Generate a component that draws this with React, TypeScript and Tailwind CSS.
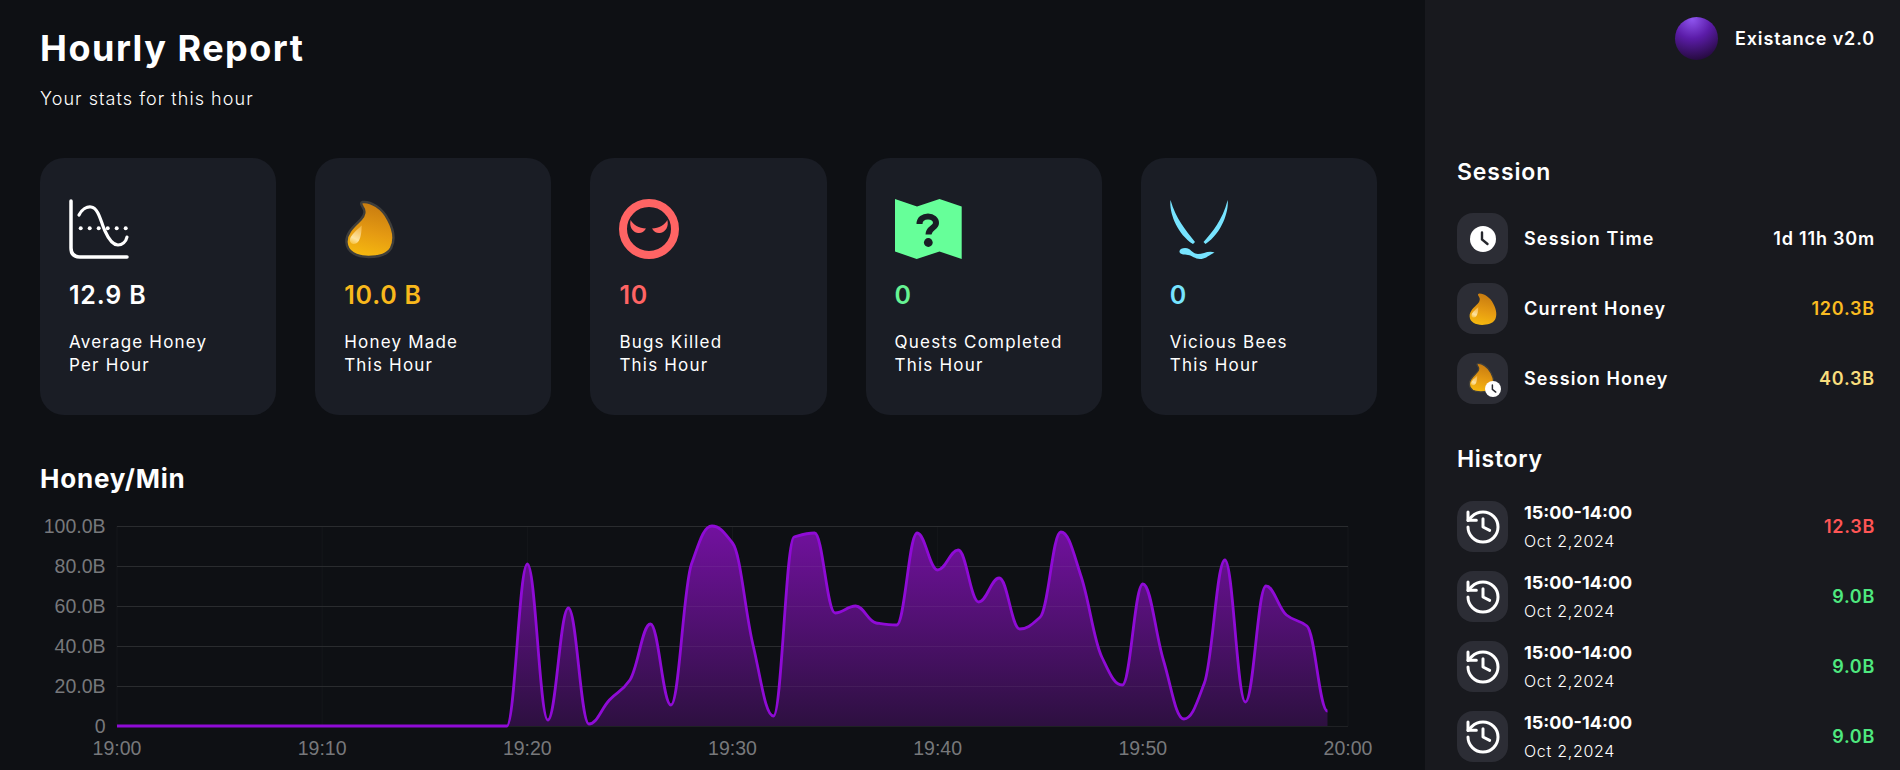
import { History } from "lucide-react";

const values = [
  0, 0, 0, 0, 0, 0, 0, 0, 0, 0, 0, 0, 0, 0, 0, 0, 0, 0, 0, 0, 81, 3, 59, 1, 13, 23, 51, 10.5, 81, 100, 91.5, 40.5, 5, 94.5, 96.5,
  56.5, 60, 51.5, 50.5, 96.5, 78, 88, 62, 74, 48.5, 54.5, 97, 74.5, 34.5, 20.5, 71, 33, 3.5, 21.5, 83, 12, 70, 55.5, 50, 7.5,
];

const X0 = 77;
const PLOT_W = 1231;
const Y_TOP = 16;
const Y_ZERO = 216;
const px = (m: number) => X0 + (m * PLOT_W) / 60;
const py = (v: number) => Y_ZERO - (v * (Y_ZERO - Y_TOP)) / 100;

function linePath() {
  const pts = values.map((v, i) => [px(i), py(v)]);
  const slope = pts.map((p, i) => {
    if (i === 0 || i === pts.length - 1) return 0;
    const a = pts[i][1] - pts[i - 1][1];
    const b = pts[i + 1][1] - pts[i][1];
    if (a * b <= 0) return 0;
    const avg = (a + b) / 2;
    const lim = 1.5 * Math.min(Math.abs(a), Math.abs(b));
    return Math.sign(avg) * Math.min(Math.abs(avg), lim);
  });
  let d = `M${pts[0][0]},${pts[0][1]}`;
  for (let i = 1; i < pts.length; i++) {
    const h = pts[i][0] - pts[i - 1][0];
    d += ` C${pts[i - 1][0] + h * 0.4},${pts[i - 1][1] + slope[i - 1] * 0.4} ${pts[i][0] - h * 0.4},${pts[i][1] - slope[i] * 0.4} ${pts[i][0]},${pts[i][1]}`;
  }
  return d;
}

function Drop({ id, size, outline }: { id: string; size: string; outline?: boolean }) {
  return (
    <svg viewBox="-1 -1 53 61" className={size}>
      <defs>
        <linearGradient id={id} x1="0.6" y1="0" x2="0.4" y2="1">
          <stop offset="0" stopColor="#c67a10" />
          <stop offset="0.55" stopColor="#e59a12" />
          <stop offset="1" stopColor="#f6b90f" />
        </linearGradient>
        <linearGradient id={`${id}h`} x1="0.6" y1="0" x2="0.3" y2="1">
          <stop offset="0" stopColor="#f3b84a" />
          <stop offset="0.7" stopColor="#fde3a0" />
          <stop offset="1" stopColor="#f8c545" />
        </linearGradient>
      </defs>
      <path
        d="M18 2C26 1 38 8 44 20C50 31 51 41 47 49C43 56 33 58 24 58C12 58 2 53 1.5 43C1 33 10 26 16 20C20 16 21 11 18 7C16 4 16 2.5 18 2Z"
        fill={`url(#${id})`}
        stroke={outline ? "#3f3e3b" : "none"}
        strokeWidth="2.5"
      />
      <path d="M17 26C13 30 5 36 5 41C5 45 10 46 13 43C16 40 17 33 17 26Z" fill={`url(#${id}h)`} />
    </svg>
  );
}

function ClockBadge({ size }: { size: string }) {
  return (
    <svg viewBox="0 0 26 26" className={size}>
      <circle cx="13" cy="13" r="13" fill="#ffffff" />
      <path d="M12 6.5V13.5L17.5 18" fill="none" stroke="#26272d" strokeWidth="2.4" strokeLinecap="round" />
    </svg>
  );
}

function ChartIcon() {
  return (
    <svg viewBox="0 0 60 60" className="h-[60px] w-[60px]" fill="none" stroke="#ffffff" strokeLinecap="round">
      <path d="M2 2V49Q2 58 11 58H58" strokeWidth="3.5" />
      <path d="M10 16C13 10 18 7.5 22 8C30 9 32 24 36 32C40 41 44 46 49 46C53 46 57 43 58 38" strokeWidth="3.2" />
      {[11.7, 20.7, 29.7, 38.7, 47.7, 56.7].map((x) => (
        <circle key={x} cx={x} cy="29.3" r="2" fill="#ffffff" stroke="none" />
      ))}
    </svg>
  );
}

function BugIcon() {
  return (
    <svg viewBox="0 0 60 60" className="h-[60px] w-[60px]">
      <circle cx="30" cy="30" r="26" fill="none" stroke="#ff6464" strokeWidth="8" />
      <path d="M11.7 21C14 26 20 29 27 29.5C25 33 22 34.5 19 34C13 33 10 27 11.7 21Z" fill="#ff6464" />
      <path d="M48.3 21C46 26 40 29 33 29.5C35 33 38 34.5 41 34C47 33 50 27 48.3 21Z" fill="#ff6464" />
    </svg>
  );
}

function MapIcon() {
  return (
    <svg viewBox="0 0 67 60" className="h-[60px] w-[67px]">
      <path d="M0 0L22 7.5L44.5 0L66.7 7.5V60L44.5 52.5L21.7 60L0 52.5Z" fill="#66ff99" />
      <path d="M24.5 25C24.5 20 28.5 17.5 33 17.5C38 17.5 41 20.5 41 24C41 29 33.5 29 33.5 35.5" fill="none" stroke="#1a1d25" strokeWidth="6" />
      <circle cx="33.3" cy="43.5" r="4.4" fill="#1a1d25" />
    </svg>
  );
}

function ViciousIcon() {
  return (
    <svg viewBox="0 0 60 60" className="h-[60px] w-[60px]" fill="#77e4ff">
      <path d="M0.5 1C-1 12 6 34 23 45L25 43C15 30 6 20 0.5 1Z" />
      <path d="M57.7 1C59 12 52 34 35.5 45L33.5 43C43 32 52 22 57.7 1Z" />
      <path d="M9.5 52C10 49 16 48 19 50C22 52 24 55 28 55C33 55 39 51 44.5 53.5C39 56 36 60 30 60C25 60 22 56.5 18 56C14 55.5 9 55.5 9.5 52Z" />
    </svg>
  );
}

const cards = [
  { icon: <ChartIcon />, value: "12.9 B", color: "text-white", a: "Average Honey", b: "Per Hour" },
  { icon: <Drop id="d1" size="h-[60px] w-[52px]" outline />, value: "10.0 B", color: "text-[#f8b81c]", a: "Honey Made", b: "This Hour" },
  { icon: <BugIcon />, value: "10", color: "text-[#ff6464]", a: "Bugs Killed", b: "This Hour" },
  { icon: <MapIcon />, value: "0", color: "text-[#66f394]", a: "Quests Completed", b: "This Hour" },
  { icon: <ViciousIcon />, value: "0", color: "text-[#77e4ff]", a: "Vicious Bees", b: "This Hour" },
];

function Chart() {
  const d = linePath();
  const yLabels = ["100.0B", "80.0B", "60.0B", "40.0B", "20.0B", "0"];
  const xLabels = ["19:00", "19:10", "19:20", "19:30", "19:40", "19:50", "20:00"];
  return (
    <svg viewBox="0 0 1385 260" className="mt-[15px] h-[260px] w-[1385px]">
      <defs>
        <linearGradient id="area" gradientUnits="userSpaceOnUse" x1="0" y1={Y_TOP} x2="0" y2={Y_ZERO}>
          <stop offset="0" stopColor="#72119f" />
          <stop offset="1" stopColor="#2d1040" />
        </linearGradient>
      </defs>
      {xLabels.map((_, i) => (
        <line key={i} x1={px(i * 10)} x2={px(i * 10)} y1={Y_TOP} y2={Y_ZERO} stroke="#15171b" />
      ))}
      {yLabels.map((_, i) => (
        <line key={i} x1={X0} x2={X0 + PLOT_W} y1={Y_TOP + i * 40 + 0.5} y2={Y_TOP + i * 40 + 0.5} stroke="#1f2124" />
      ))}
      <path d={`${d} L${px(59)},${Y_ZERO} L${X0},${Y_ZERO} Z`} fill="url(#area)" />
      {yLabels.slice(0, 5).map((_, i) => (
        <line key={i} x1={X0} x2={X0 + PLOT_W} y1={Y_TOP + i * 40 + 0.5} y2={Y_TOP + i * 40 + 0.5} stroke="#ffffff" strokeOpacity="0.05" />
      ))}
      <path d={d} fill="none" stroke="#8f0bd6" strokeWidth="2.8" />
      <g fill="#77787b" fontFamily="'Liberation Sans', Arial, sans-serif" fontSize="19.5">
        {yLabels.map((t, i) => (
          <text key={t} x="65.5" y={Y_TOP + i * 40 + 7} textAnchor="end">
            {t}
          </text>
        ))}
        {xLabels.map((t, i) => (
          <text key={t} x={px(i * 10)} y="245" textAnchor="middle">
            {t}
          </text>
        ))}
      </g>
    </svg>
  );
}

function SessionRow({ icon, label, value, color }: { icon: React.ReactNode; label: string; value: string; color: string }) {
  return (
    <div className="flex h-[51px] items-center">
      <div className="relative flex h-[51px] w-[51px] items-center justify-center rounded-[16px] bg-[#2c2d35]">{icon}</div>
      <span className="ml-[16px] text-[18px] font-semibold tracking-[1.15px] text-white">{label}</span>
      <span className={`ml-auto text-[18px] font-semibold tracking-[0.8px] ${color}`}>{value}</span>
    </div>
  );
}

function HistoryRow({ value, color }: { value: string; color: string }) {
  return (
    <div className="flex h-[51px] items-center">
      <div className="flex h-[51px] w-[51px] items-center justify-center rounded-[16px] bg-[#2c2d35]">
        <History size={40} strokeWidth={1.8} color="#ffffff" />
      </div>
      <div className="ml-[16px] flex flex-col">
        <span className="text-[18px] leading-[24px] font-bold text-white">15:00-14:00</span>
        <span className="mt-[4px] text-[16px] leading-[24px] font-light tracking-[0.7px] text-white">Oct 2,2024</span>
      </div>
      <span className={`ml-auto text-[18px] font-semibold tracking-[0.7px] ${color}`}>{value}</span>
    </div>
  );
}

export default function App() {
  return (
    <div className="flex h-[770px] w-[1900px] overflow-hidden bg-[#0e1014] font-['Inter','Liberation_Sans',sans-serif] text-white">
      <main className="w-[1425px] shrink-0 pl-[40px]">
        <h1 className="pt-[26px] text-[36px] leading-[44px] font-bold tracking-[1.5px]">Hourly Report</h1>
        <p className="mt-[17px] text-[18px] leading-[24px] font-light tracking-[1.05px]">Your stats for this hour</p>
        <div className="mt-[47px] grid w-[1337px] grid-cols-5 gap-x-[39px]">
          {cards.map((c) => (
            <div key={c.a} className="h-[257px] rounded-[24px] bg-[#1a1d25] pt-[41px] pl-[29px]">
              <div className="flex h-[60px] items-center">{c.icon}</div>
              <div className={`mt-[20px] text-[25px] leading-[32px] font-semibold tracking-[0.8px] ${c.color}`}>{c.value}</div>
              <div className="mt-[20px] text-[17px] leading-[23px] font-normal tracking-[1.2px]">
                <div>{c.a}</div>
                <div>{c.b}</div>
              </div>
            </div>
          ))}
        </div>
        <h2 className="mt-[48px] text-[26px] leading-[32px] font-bold tracking-[0.8px]">Honey/Min</h2>
        <Chart />
      </main>
      <aside className="flex-1 bg-[#18191e] pr-[25px] pl-[32px]">
        <div className="flex items-center justify-end pt-[17px]">
          <div className="h-[43px] w-[43px] rounded-full bg-[radial-gradient(circle_at_40%_5%,#8f55ef_0%,#5b1ca8_40%,#1e0830_92%)]" />
          <span className="ml-[17px] text-[18px] font-semibold tracking-[0.85px]">Existance v2.0</span>
        </div>
        <h3 className="mt-[97px] text-[23px] leading-[30px] font-semibold tracking-[0.9px]">Session</h3>
        <div className="mt-[26px] flex flex-col gap-[19px]">
          <SessionRow icon={<ClockBadge size="h-[26px] w-[26px]" />} label="Session Time" value="1d 11h 30m" color="text-white" />
          <SessionRow icon={<Drop id="d2" size="h-[34px] w-[30px]" />} label="Current Honey" value="120.3B" color="text-[#f9bb21]" />
          <SessionRow
            icon={
              <>
                <span className="mr-[3px] mb-[2px]">
                  <Drop id="d3" size="h-[31px] w-[27px]" outline />
                </span>
                <span className="absolute right-[7px] bottom-[7px]">
                  <ClockBadge size="h-[16px] w-[16px]" />
                </span>
              </>
            }
            label="Session Honey"
            value="40.3B"
            color="text-[#f8dd7c]"
          />
        </div>
        <h3 className="mt-[40px] text-[23px] leading-[30px] font-semibold tracking-[0.7px]">History</h3>
        <div className="mt-[27px] flex flex-col gap-[19px]">
          <HistoryRow value="12.3B" color="text-[#ff5555]" />
          <HistoryRow value="9.0B" color="text-[#4ee87f]" />
          <HistoryRow value="9.0B" color="text-[#4ee87f]" />
          <HistoryRow value="9.0B" color="text-[#4ee87f]" />
        </div>
      </aside>
    </div>
  );
}
